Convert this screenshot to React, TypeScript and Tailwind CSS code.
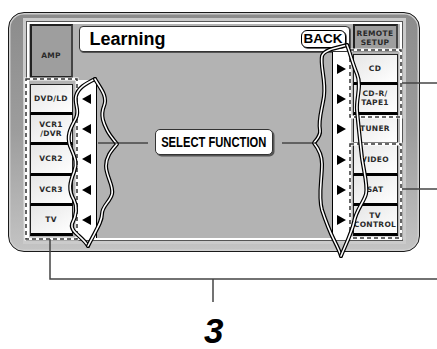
const leftButtons = [["DVD/LD"], ["VCR1", "/DVR"], ["VCR2"], ["VCR3"], ["TV"]];
const rightButtons = [["CD"], ["CD-R/", "TAPE1"], ["TUNER"], ["VIDEO"], ["SAT"], ["TV", "CONTROL"]];

const label = "font-['DejaVu_Sans',sans-serif] text-[7.5px] font-bold leading-[9px] tracking-[0.3px] text-[#2a2a2a]";

const TriLeft = () => (
  <svg width="9" height="10" viewBox="0 0 9 10">
    <polygon points="0,5 9,0 9,10" fill="#000" />
  </svg>
);

const TriRight = () => (
  <svg width="9" height="10" viewBox="0 0 9 10">
    <polygon points="9,5 0,0 0,10" fill="#000" />
  </svg>
);

const KeyButton = ({ lines, h }: { lines: string[]; h: string }) => (
  <div className={`${h} flex flex-col items-center justify-center border-x border-b-[3px] border-x-[#222] border-b-black bg-linear-to-br from-[#e6e6e6] to-white text-center`}>
    {lines.map((l) => (
      <span key={l} className={label}>
        {l}
      </span>
    ))}
  </div>
);

// annotation layer: braces, dashed groups and leader lines
const Overlay = () => (
  <svg className="pointer-events-none absolute top-0 left-0" width="437" height="349" viewBox="0 0 437 349">
    {/* dashed groups */}
    <g fill="none">
      <rect x="26" y="79" width="51" height="160" stroke="#fff" strokeWidth="3" />
      <rect x="26" y="79" width="51" height="160" stroke="#333" strokeWidth="1.5" strokeDasharray="4 3" />
      <rect x="350" y="50" width="51" height="67" stroke="#fff" strokeWidth="3" />
      <rect x="350" y="50" width="51" height="67" stroke="#333" strokeWidth="1.5" strokeDasharray="4 3" />
      <rect x="350" y="144" width="51" height="94" stroke="#fff" strokeWidth="3" />
      <rect x="350" y="144" width="51" height="94" stroke="#333" strokeWidth="1.5" strokeDasharray="4 3" />
    </g>

    {/* braces */}
    <g fill="none" strokeLinejoin="round" strokeLinecap="round">
      {[
        "M95,79 C85,84 78,88 76,96 C74,104 80,110 76,118 C72,126 66,134 70,146 C74,156 78,162 74,172 C70,182 68,190 74,200 C78,208 76,216 72,224 C70,232 82,236 88,246",
        "M95,79 C100,88 108,96 104,106 C100,116 104,124 107,130 C110,136 114,140 117,144 C112,150 106,156 106,166 C106,176 114,186 112,194 C110,202 102,206 102,214 C102,222 96,230 88,246",
        "M347,45 C335,48 324,50 322,56 C320,66 326,80 324,96 C322,110 318,120 320,130 C321,136 316,140 314,143 C318,148 322,154 322,164 C322,180 318,196 322,210 C326,222 330,232 334,240 C337,246 340,252 341,256",
        "M347,45 C350,52 352,62 357,74 C362,86 356,98 357,110 C358,122 360,140 362,158 C364,172 368,186 366,194 C364,202 356,210 354,222 C352,232 346,244 341,256",
      ].map((d) => (
        <g key={d}>
          <path d={d} stroke="#000" strokeWidth="4" />
          <path d={d} stroke="#fff" strokeWidth="1.6" />
        </g>
      ))}
    </g>

    {/* leader lines */}
    <g stroke="#111" strokeWidth="1">
      <line x1="98" y1="143" x2="148" y2="143" />
      <line x1="282" y1="143" x2="316" y2="143" />
    </g>
    <g stroke="#444" strokeWidth="1.5" fill="none">
      <line x1="402" y1="83" x2="437" y2="83" />
      <line x1="402" y1="189" x2="437" y2="189" />
      <polyline points="50,239 50,279 437,279" />
      <line x1="213" y1="279" x2="213" y2="302" />
    </g>
  </svg>
);

export default function App() {
  return (
    <div className="relative h-[349px] w-[437px] overflow-hidden bg-white">
      <div className="pt-[12px] pl-[8px]">
        <div className="h-[240px] w-[412px] rounded-[16px] border-[1.5px] border-[#1a1a1a] bg-linear-to-b from-[#8c8c8c] via-[#9d9d9d] to-[#c4c4c4] pt-[8.5px] pr-[16.5px] pb-[10.5px] pl-[17.5px] shadow-[inset_0_0_0_1.5px_#cfcfcf]">
          <div className="flex h-[218px] w-[375px] border-2 border-white bg-[#b3b3b3] pr-[2px] pl-[1px] shadow-[0_0_0_1px_#555,0_0_0_4px_#cbcbcb]">
            {/* left column */}
            <div className="flex w-[43px] flex-col">
              <div className="flex h-[54px] items-center justify-center border-2 border-[#222] border-r-[#444] bg-[#9e9e9e] pt-[10px]">
                <span className={label}>AMP</span>
              </div>
              <div className="mt-[6px] flex flex-col border-t border-[#222]">
                {leftButtons.map((b) => (
                  <KeyButton key={b.join()} lines={b} h="h-[30.4px]" />
                ))}
              </div>
            </div>

            {/* middle */}
            <div className="ml-[5px] flex flex-1 flex-col">
              <div className="mx-[1px] mt-[2px] flex h-[26px] items-center justify-between rounded-[4px] border border-[#333] bg-white pr-[3px] pl-[10px] shadow-[1px_1px_0_#555]">
                <span className="font-['Liberation_Sans',Arial,sans-serif] text-[18px] leading-none font-bold text-black">Learning</span>
                <span className="rounded-[6px] border-[1.5px] border-black bg-white px-[2px] font-['Liberation_Sans',Arial,sans-serif] text-[13.5px] leading-[16px] font-bold text-black shadow-[1px_1px_0_#666]">
                  BACK
                </span>
              </div>
              <div className="flex flex-1">
                <div className="mt-[28px] flex w-[19px] flex-col border-r border-black bg-white pt-[4px]">
                  {leftButtons.map((b) => (
                    <div key={b.join()} className="flex h-[30.4px] items-center justify-center">
                      <TriLeft />
                    </div>
                  ))}
                </div>
                <div className="flex flex-1 items-center justify-center pb-[6px]">
                  <div className="flex h-[26px] w-[118px] items-center justify-center rounded-[5px] border border-[#333] bg-white shadow-[1.5px_1.5px_0_#555]">
                    <span className="inline-block scale-x-[0.8] font-['Liberation_Sans',Arial,sans-serif] text-[14px] leading-none font-bold whitespace-nowrap text-black">
                      SELECT FUNCTION
                    </span>
                  </div>
                </div>
                <div className="flex w-[19px] flex-col border-l border-black bg-white pt-[2px]">
                  {rightButtons.map((b) => (
                    <div key={b.join()} className="flex h-[30.33px] items-center justify-center">
                      <TriRight />
                    </div>
                  ))}
                </div>
              </div>
            </div>

            {/* right column */}
            <div className="ml-[2px] flex w-[45px] flex-col">
              <div className="flex h-[28px] flex-col items-center justify-center border-2 border-[#222] border-r-[#444] bg-[#9e9e9e]">
                <span className={label}>REMOTE</span>
                <span className={label}>SETUP</span>
              </div>
              <div className="mt-[2px] flex flex-col border-t border-[#222]">
                {rightButtons.map((b) => (
                  <KeyButton key={b.join()} lines={b} h="h-[30.33px]" />
                ))}
              </div>
            </div>
          </div>
        </div>
      </div>

      <div className="mt-[61px] pl-[204px] font-['Liberation_Sans',Arial,sans-serif] text-[35px] leading-none font-bold text-black italic">
        3
      </div>

      <Overlay />
    </div>
  );
}
